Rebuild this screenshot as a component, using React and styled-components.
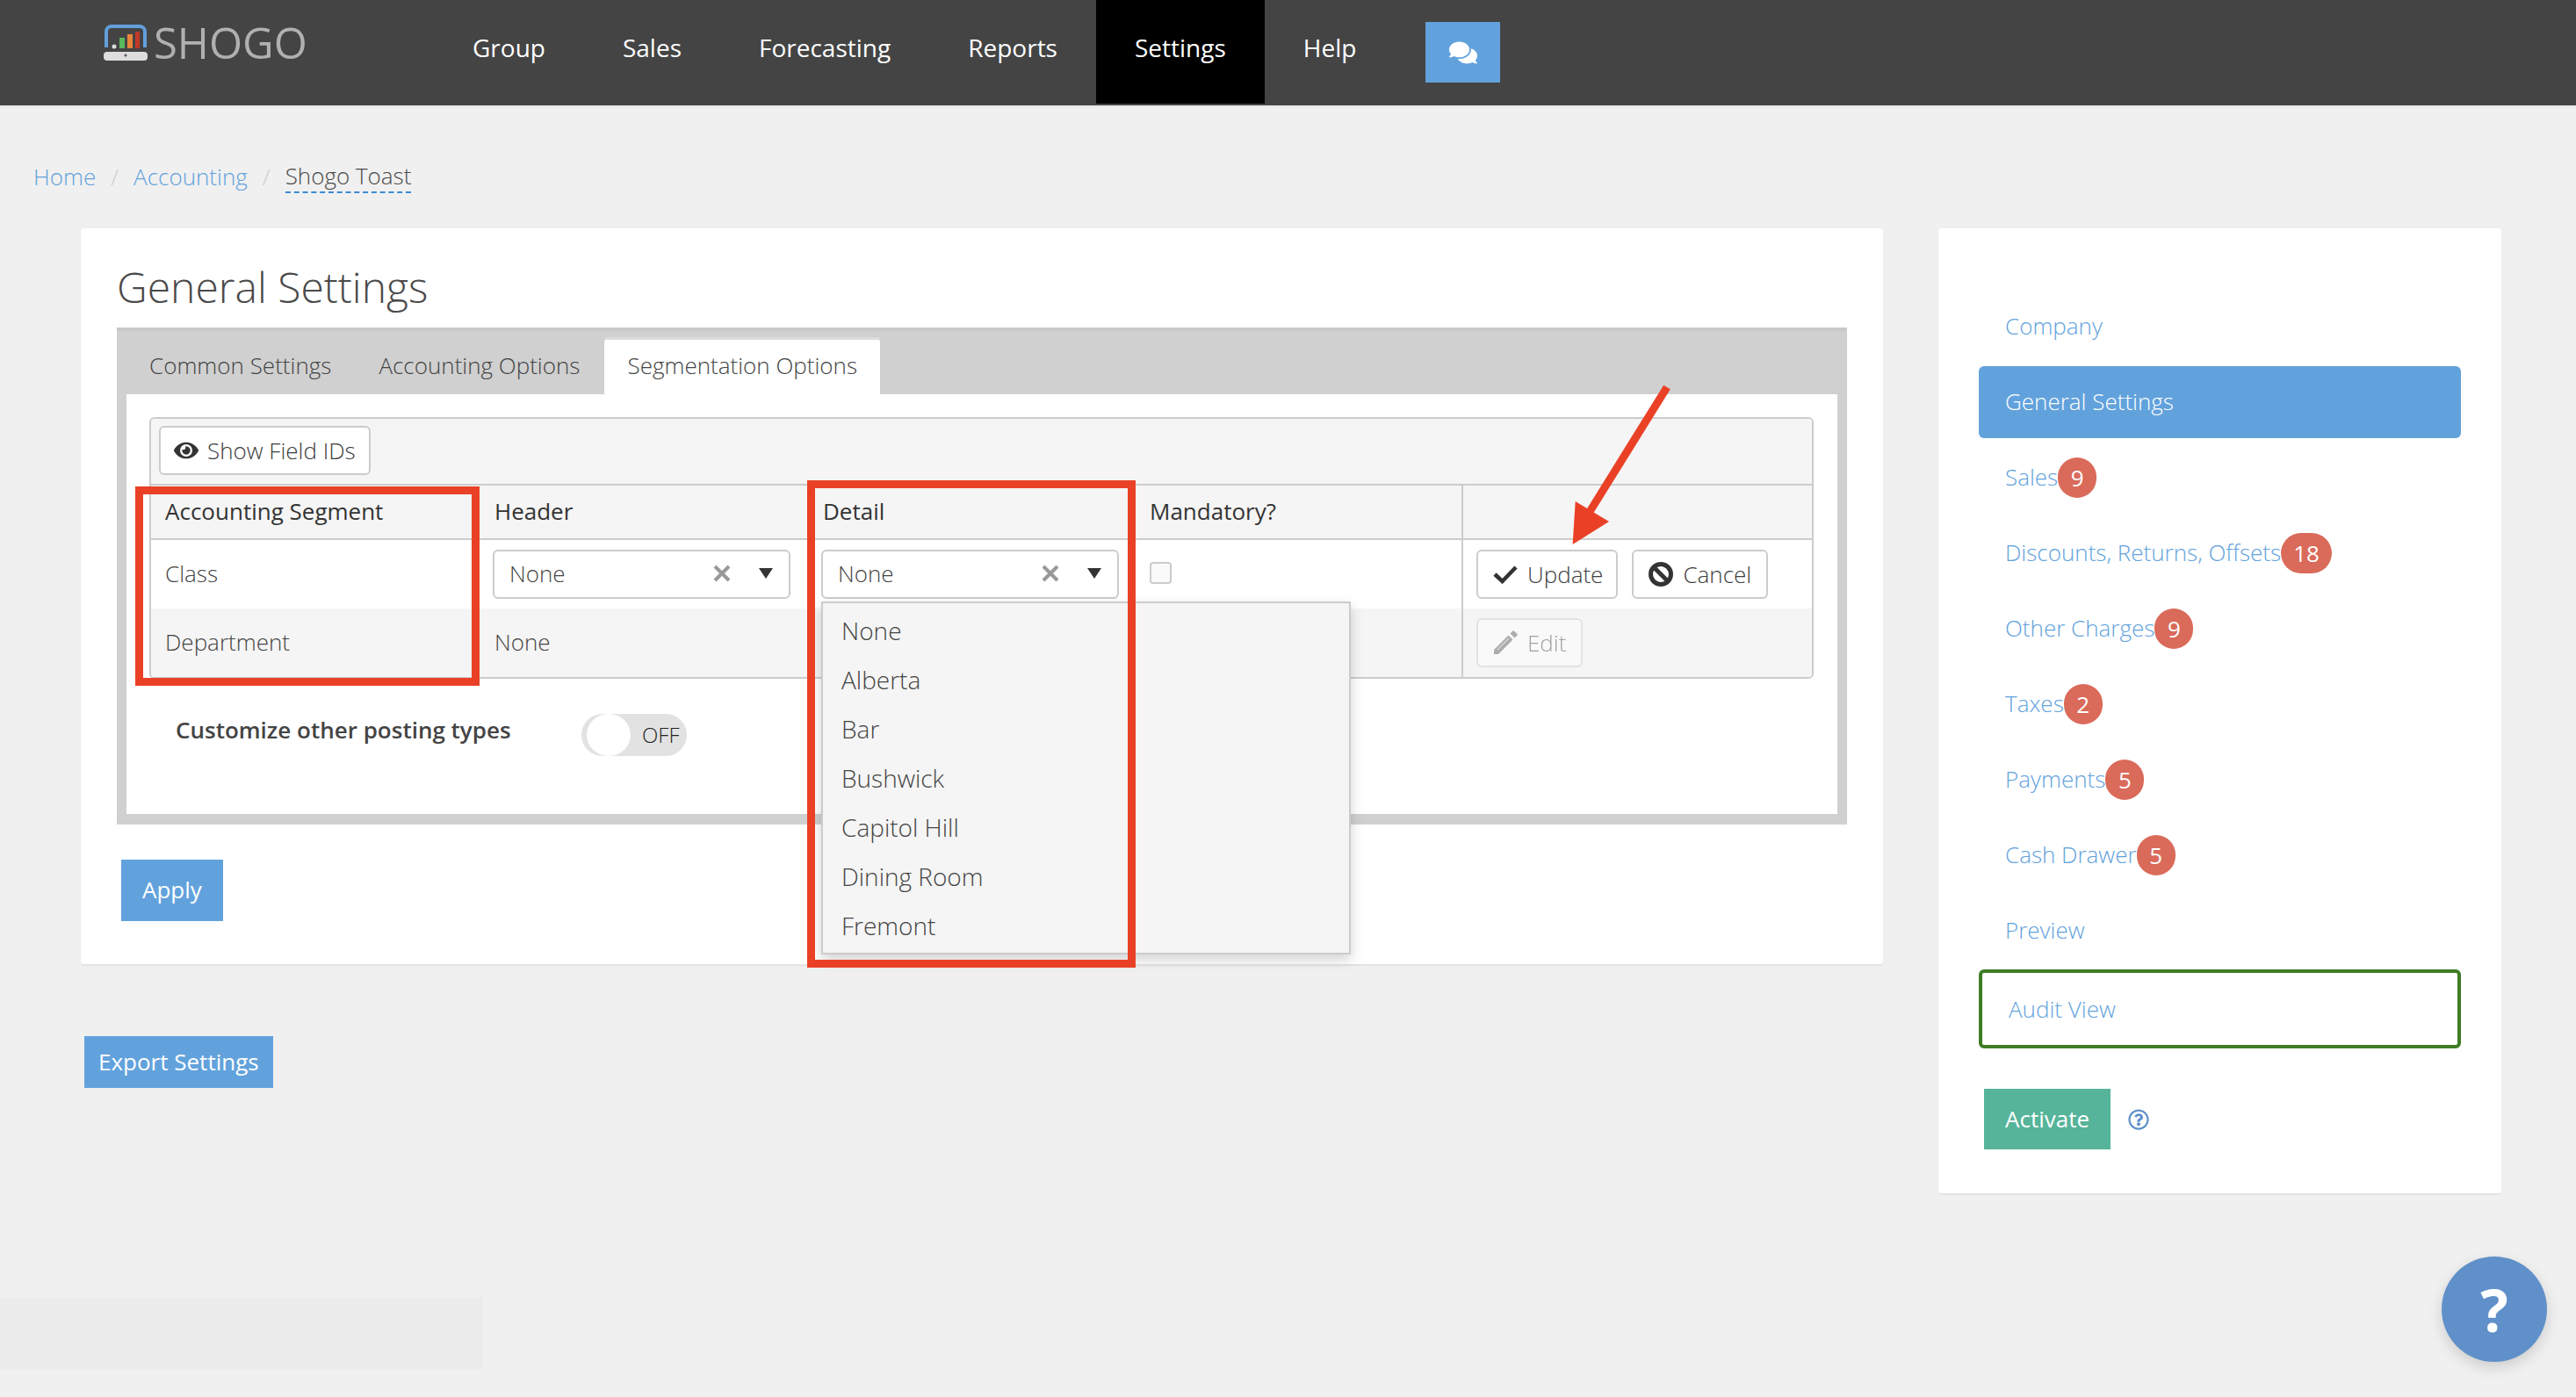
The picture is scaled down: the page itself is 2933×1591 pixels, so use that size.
import React from "react";
import styled, { createGlobalStyle } from "styled-components";
import { FaEye, FaComments, FaRegQuestionCircle } from "react-icons/fa";

const Global = createGlobalStyle`
  html, body { margin: 0; padding: 0; background: #f0f0f0; }
  * { box-sizing: border-box; }
  body { font-family: "Open Sans", "Liberation Sans", sans-serif; font-size: 26px; color: #4a4a4a; }
`;

const Page = styled.div`
  position: relative;
  width: 2933px;
  height: 1591px;
  overflow: hidden;
`;

const Header = styled.header`
  display: flex;
  align-items: flex-start;
  height: 122px;
  background: #444;
  border-bottom: 2px solid #e4e8ec;
  padding-left: 118px;
`;

const Logo = styled.div`
  display: flex;
  align-items: center;
  gap: 7px;
  width: 376px;
  height: 41px;
  margin-top: 28px;
  filter: blur(0.7px);
`;

const LogoText = styled.span`
  font-size: 49px;
  line-height: 41px;
  color: #b0b0b0;
`;

const Nav = styled.nav`
  display: flex;
  align-items: flex-start;
`;

const NavItem = styled.a`
  display: block;
  height: 118px;
  line-height: 108px;
  padding: 0 44px;
  color: #fff;
  font-size: 28px;
  background: ${(p) => (p.$active ? "#000" : "transparent")};
`;

const ChatButton = styled.button`
  display: flex;
  align-items: center;
  justify-content: center;
  width: 85px;
  height: 69px;
  margin: 25px 0 0 35px;
  border: 0;
  background: #62a2dc;
  color: #fff;
  font-size: 32px;
`;

const Crumbs = styled.div`
  display: flex;
  align-items: center;
  height: 38px;
  margin-top: 60px;
  padding-left: 38px;
  font-weight: 300;
`;

const CrumbLink = styled.a`
  color: #62a2dc;
`;

const CrumbSep = styled.span`
  color: #ccc;
  margin: 0 17px;
`;

const CrumbCurrent = styled.span`
  color: #4a4a4a;
  line-height: 36px;
  border-bottom: 2px dashed #3c8ad6;
`;

const Main = styled.main`
  display: flex;
  align-items: flex-start;
  gap: 63px;
  margin-top: 40px;
  padding-left: 92px;
`;

const LeftColumn = styled.div`
  width: 2052px;
`;

const Card = styled.section`
  background: #fff;
  border-radius: 4px;
  box-shadow: 0 2px 2px rgba(0, 0, 0, 0.06);
`;

const SettingsCard = styled(Card)`
  height: 838px;
  padding: 37px 0 0 41px;
`;

const Title = styled.h1`
  margin: 0 0 16px;
  font-size: 48px;
  line-height: 60px;
  font-weight: 300;
  color: #4a4a4a;
`;

const TabFrame = styled.div`
  width: 1970px;
  height: 566px;
  background: #d0d0d0;
  border-top: 4px solid #c8c8c8;
  padding: 0 11px 12px 11px;
  display: flex;
  flex-direction: column;
`;

const TabStrip = styled.div`
  display: flex;
  align-items: flex-end;
  height: 72px;
`;

const Tab = styled.div`
  height: 62px;
  line-height: 58px;
  padding: 0 26px;
  margin-right: 2px;
  font-weight: 300;
  color: #444;
  background: ${(p) => (p.$active ? "#fff" : "transparent")};
  box-shadow: ${(p) => (p.$active ? "0 -3px 0 #dcdcdc" : "none")};
  border-radius: 3px 3px 0 0;
`;

const TabBody = styled.div`
  flex: 1;
  background: #fff;
  padding: 26px 27px 0 26px;
`;

const DataBox = styled.div`
  border: 2px solid #ccc;
  border-radius: 6px;
`;

const Toolbar = styled.div`
  height: 76px;
  padding: 8px 0 0 9px;
  background: #f5f5f5;
  border-bottom: 2px solid #ccc;
  border-radius: 5px 5px 0 0;
`;

const Button = styled.button`
  display: inline-flex;
  align-items: center;
  gap: ${(p) => p.$gap || 11}px;
  height: 56px;
  padding: 0 ${(p) => p.$pr || 15}px 0 ${(p) => p.$pl || 17}px;
  background: #fff;
  border: 2px solid #ccc;
  border-radius: 6px;
  font: 300 26px "Open Sans", sans-serif;
  color: #3d3d3d;
  opacity: ${(p) => (p.disabled ? 0.45 : 1)};
  svg { flex: none; color: #333; }
`;

const Row = styled.div`
  display: grid;
  grid-template-columns: 375px 374px 372px 371px 1fr;
  background: ${(p) => (p.$striped ? "#f5f5f5" : "#fff")};
  border-bottom: ${(p) => (p.$head ? "2px solid #ccc" : "0")};
  border-radius: ${(p) => (p.$last ? "0 0 5px 5px" : "0")};
`;

const Cell = styled.div`
  display: flex;
  align-items: center;
  height: ${(p) => (p.$head ? 60 : 78)}px;
  padding-left: 16px;
  padding-bottom: 2px;
  font-weight: ${(p) => (p.$head ? 400 : 300)};
  color: ${(p) => (p.$head ? "#333" : "#444")};
  position: relative;
`;

const ActionCell = styled(Cell)`
  gap: 16px;
  padding-left: 15px;
  padding-bottom: 0;
  border-left: 2px solid #ccc;
`;

const Select = styled.div`
  position: relative;
  display: flex;
  align-items: center;
  flex: none;
  width: 339px;
  height: 56px;
  margin: 2px 0 0 -2px;
  padding: 0 0 2px 17px;
  background: #fff;
  border: 2px solid #ccc;
  border-radius: 6px;
  font-weight: 300;
`;

const SelectValue = styled.span`
  flex: 1;
`;

const ClearIcon = styled.svg`
  width: 20px;
  height: 20px;
  margin-right: 32px;
`;

const Caret = styled.span`
  width: 0;
  height: 0;
  margin-right: 18px;
  border-left: 8px solid transparent;
  border-right: 8px solid transparent;
  border-top: 12px solid #333;
`;

const Menu = styled.div`
  position: absolute;
  top: 57px;
  left: -2px;
  z-index: 3;
  width: 603px;
  padding: 5px 0 1px;
  background: #f5f5f5;
  border: 2px solid #ccc;
  box-shadow: 0 6px 14px rgba(0, 0, 0, 0.18);
`;

const MenuItem = styled.div`
  height: 56px;
  line-height: 52px;
  padding-left: 21px;
  font-weight: 300;
  font-size: 28px;
  color: #444;
`;

const CheckBox = styled.span`
  display: block;
  width: 25px;
  height: 25px;
  margin-bottom: 1px;
  background: #fafafa;
  border: 2px solid #ccc;
  border-radius: 4px;
`;

const ToggleRow = styled.div`
  display: flex;
  align-items: flex-start;
  gap: 81px;
  margin-top: 40px;
  padding-left: 30px;
`;

const ToggleLabel = styled.span`
  width: 381px;
  line-height: 36px;
  font-weight: 600;
  color: #444;
  white-space: nowrap;
`;

const Toggle = styled.div`
  position: relative;
  width: 120px;
  height: 48px;
  line-height: 48px;
  padding-left: 69px;
  border-radius: 24px;
  background: #e2e2e2;
  font-size: 24px;
  font-weight: 300;
  color: #222;
  &::before {
    content: "";
    position: absolute;
    left: 6px;
    top: 0;
    width: 50px;
    height: 48px;
    border-radius: 50%;
    background: #fff;
  }
`;

const PrimaryButton = styled.button`
  display: block;
  height: ${(p) => p.$h}px;
  padding: 0 ${(p) => p.$px}px 2px;
  border: 0;
  background: ${(p) => p.$bg || "#62a2dc"};
  color: #fff;
  font: 400 26px "Open Sans", sans-serif;
`;

const ApplyButton = styled(PrimaryButton)`
  margin: 40px 0 0 5px;
  padding-bottom: 3px;
`;

const ExportButton = styled(PrimaryButton)`
  margin: 82px 0 0 4px;
`;

const SideCard = styled(Card)`
  width: 641px;
  height: 1099px;
  padding: 71px 46px 0;
`;

const SideItem = styled.a`
  display: flex;
  align-items: center;
  height: 82px;
  margin-bottom: 4px;
  padding: 0 0 2px 30px;
  font-weight: 300;
  color: ${(p) => (p.$active ? "#fff" : "#62a2dc")};
  background: ${(p) => (p.$active ? "#62a2dc" : "transparent")};
  border-radius: 6px;
`;

const AuditItem = styled(SideItem)`
  height: 90px;
  margin: -1px 0 0;
  padding: 0 0 0 30px;
  border: 4px solid #3e7d25;
`;

const Badge = styled.span`
  display: inline-flex;
  align-items: center;
  justify-content: center;
  min-width: 44px;
  height: 46px;
  margin-top: 2px;
  padding: 0 14px;
  border-radius: 23px;
  background: #da6a5a;
  color: #fff;
  font-weight: 400;
`;

const ActivateRow = styled.div`
  display: flex;
  align-items: center;
  gap: 20px;
  margin: 46px 0 0 6px;
  color: #5c8fc9;
  font-size: 24px;
`;

const RedBox = styled.div`
  position: absolute;
  z-index: 5;
  left: ${(p) => p.$x}px;
  top: ${(p) => p.$y}px;
  width: ${(p) => p.$w}px;
  height: ${(p) => p.$h}px;
  border: 9px solid #ea4126;
  pointer-events: none;
`;

const Arrow = styled.svg`
  position: absolute;
  z-index: 5;
  left: 1780px;
  top: 430px;
`;

const SideStrip = styled.div`
  position: absolute;
  left: 0;
  top: 1477px;
  width: 550px;
  height: 83px;
  background: #ececec;
`;

const HelpFab = styled.div`
  position: absolute;
  left: 2780px;
  top: 1431px;
  width: 120px;
  height: 120px;
  display: flex;
  align-items: center;
  justify-content: center;
  border-radius: 50%;
  background: #6090c9;
  color: #fff;
  font-size: 66px;
  font-weight: 700;
  box-shadow: 0 6px 16px rgba(0, 0, 0, 0.15);
`;

const tabs = ["Common Settings", "Accounting Options", "Segmentation Options"];
const navItems = ["Group", "Sales", "Forecasting", "Reports", "Settings", "Help"];
const options = ["None", "Alberta", "Bar", "Bushwick", "Capitol Hill", "Dining Room", "Fremont"];
const sideItems = [
  ["Company"],
  ["General Settings", null, true],
  ["Sales", 9],
  ["Discounts, Returns, Offsets", 18],
  ["Other Charges", 9],
  ["Taxes", 2],
  ["Payments", 5],
  ["Cash Drawer", 5],
  ["Preview"],
];

function LogoMark() {
  return (
    <svg width="50" height="41" viewBox="0 0 50 41">
      <path d="M3 26V8a6 6 0 0 1 6-6h32a6 6 0 0 1 6 6v18" fill="none" stroke="#629fdb" strokeWidth="4" />
      <circle cx="12" cy="25" r="2.5" fill="#ddd" />
      <rect x="18" y="15" width="6" height="12" fill="#5cb85c" />
      <rect x="27" y="11" width="6" height="16" fill="#e8853a" />
      <rect x="36" y="8" width="5" height="19" fill="#c0392b" />
      <rect x="0" y="31" width="50" height="10" rx="4" fill="#ddd" />
      <circle cx="25" cy="35" r="1.5" fill="#555" />
    </svg>
  );
}

function ClearX() {
  return (
    <ClearIcon viewBox="0 0 20 20">
      <path d="M2 2l16 16M18 2L2 18" stroke="#999" strokeWidth="4" />
    </ClearIcon>
  );
}

function CheckIcon() {
  return (
    <svg width="28" height="22" viewBox="0 0 28 22">
      <path d="M2 11l8.5 8L26 3" fill="none" stroke="#333" strokeWidth="4.5" />
    </svg>
  );
}

function BanIcon() {
  return (
    <svg width="28" height="28" viewBox="0 0 28 28">
      <circle cx="14" cy="14" r="11.5" fill="none" stroke="#333" strokeWidth="5" />
      <path d="M6 6l16 16" stroke="#333" strokeWidth="5" />
    </svg>
  );
}

function PencilIcon() {
  return (
    <svg width="28" height="28" viewBox="0 0 28 28">
      <path d="M19.5 3.5L22.5 .5a1 1 0 0 1 1.4 0l3.6 3.6a1 1 0 0 1 0 1.4l-3 3z" fill="#555" />
      <path d="M1 22L17.5 5.5l5 5L6 27H1z" fill="#555" />
      <path d="M5 22L18 9" stroke="#bbb" strokeWidth="1.2" />
    </svg>
  );
}

export default function App() {
  return (
    <Page>
      <Global />
      <Header>
        <Logo>
          <LogoMark />
          <LogoText>SHOGO</LogoText>
        </Logo>
        <Nav>
          {navItems.map((n) => (
            <NavItem key={n} $active={n === "Settings"}>{n}</NavItem>
          ))}
          <ChatButton aria-label="Chat"><FaComments /></ChatButton>
        </Nav>
      </Header>

      <Crumbs>
        <CrumbLink>Home</CrumbLink>
        <CrumbSep>/</CrumbSep>
        <CrumbLink>Accounting</CrumbLink>
        <CrumbSep>/</CrumbSep>
        <CrumbCurrent>Shogo Toast</CrumbCurrent>
      </Crumbs>

      <Main>
        <LeftColumn>
          <SettingsCard>
            <Title>General Settings</Title>
            <TabFrame>
              <TabStrip>
                {tabs.map((t, i) => (
                  <Tab key={t} $active={i === 2}>{t}</Tab>
                ))}
              </TabStrip>
              <TabBody>
                <DataBox>
                  <Toolbar>
                    <Button $gap={10} $pl={15} $pr={15}><FaEye size={28} />Show Field IDs</Button>
                  </Toolbar>
                  <Row $head $striped>
                    <Cell $head>Accounting Segment</Cell>
                    <Cell $head>Header</Cell>
                    <Cell $head>Detail</Cell>
                    <Cell $head>Mandatory?</Cell>
                    <ActionCell $head />
                  </Row>
                  <Row>
                    <Cell>Class</Cell>
                    <Cell>
                      <Select>
                        <SelectValue>None</SelectValue>
                        <ClearX />
                        <Caret />
                      </Select>
                    </Cell>
                    <Cell>
                      <Select>
                        <SelectValue>None</SelectValue>
                        <ClearX />
                        <Caret />
                        <Menu>
                          {options.map((o) => (
                            <MenuItem key={o}>{o}</MenuItem>
                          ))}
                        </Menu>
                      </Select>
                    </Cell>
                    <Cell><CheckBox /></Cell>
                    <ActionCell>
                      <Button><CheckIcon />Update</Button>
                      <Button $pr={17}><BanIcon />Cancel</Button>
                    </ActionCell>
                  </Row>
                  <Row $striped $last>
                    <Cell>Department</Cell>
                    <Cell>None</Cell>
                    <Cell />
                    <Cell />
                    <ActionCell>
                      <Button disabled $pr={17}><PencilIcon />Edit</Button>
                    </ActionCell>
                  </Row>
                </DataBox>
                <ToggleRow>
                  <ToggleLabel>Customize other posting types</ToggleLabel>
                  <Toggle>OFF</Toggle>
                </ToggleRow>
              </TabBody>
            </TabFrame>
            <ApplyButton $h={70} $px={24}>Apply</ApplyButton>
          </SettingsCard>
          <ExportButton $h={59} $px={16}>Export Settings</ExportButton>
        </LeftColumn>

        <SideCard>
          {sideItems.map(([label, count, active]) => (
            <SideItem key={label} $active={active}>
              {label}
              {count != null && <Badge>{count}</Badge>}
            </SideItem>
          ))}
          <AuditItem>Audit View</AuditItem>
          <ActivateRow>
            <PrimaryButton $h={69} $px={24} $bg="#56b49a">Activate</PrimaryButton>
            <FaRegQuestionCircle />
          </ActivateRow>
        </SideCard>
      </Main>

      <SideStrip />
      <HelpFab>?</HelpFab>

      <RedBox $x={154} $y={554} $w={392} $h={227} />
      <RedBox $x={919} $y={547} $w={374} $h={555} />
      <Arrow width="130" height="200" viewBox="0 0 130 200">
        <path d="M118 11L30.5 152" stroke="#ea4126" strokeWidth="9" fill="none" />
        <path d="M10.6 190L13.7 141L52 164Z" fill="#ea4126" />
      </Arrow>
    </Page>
  );
}
